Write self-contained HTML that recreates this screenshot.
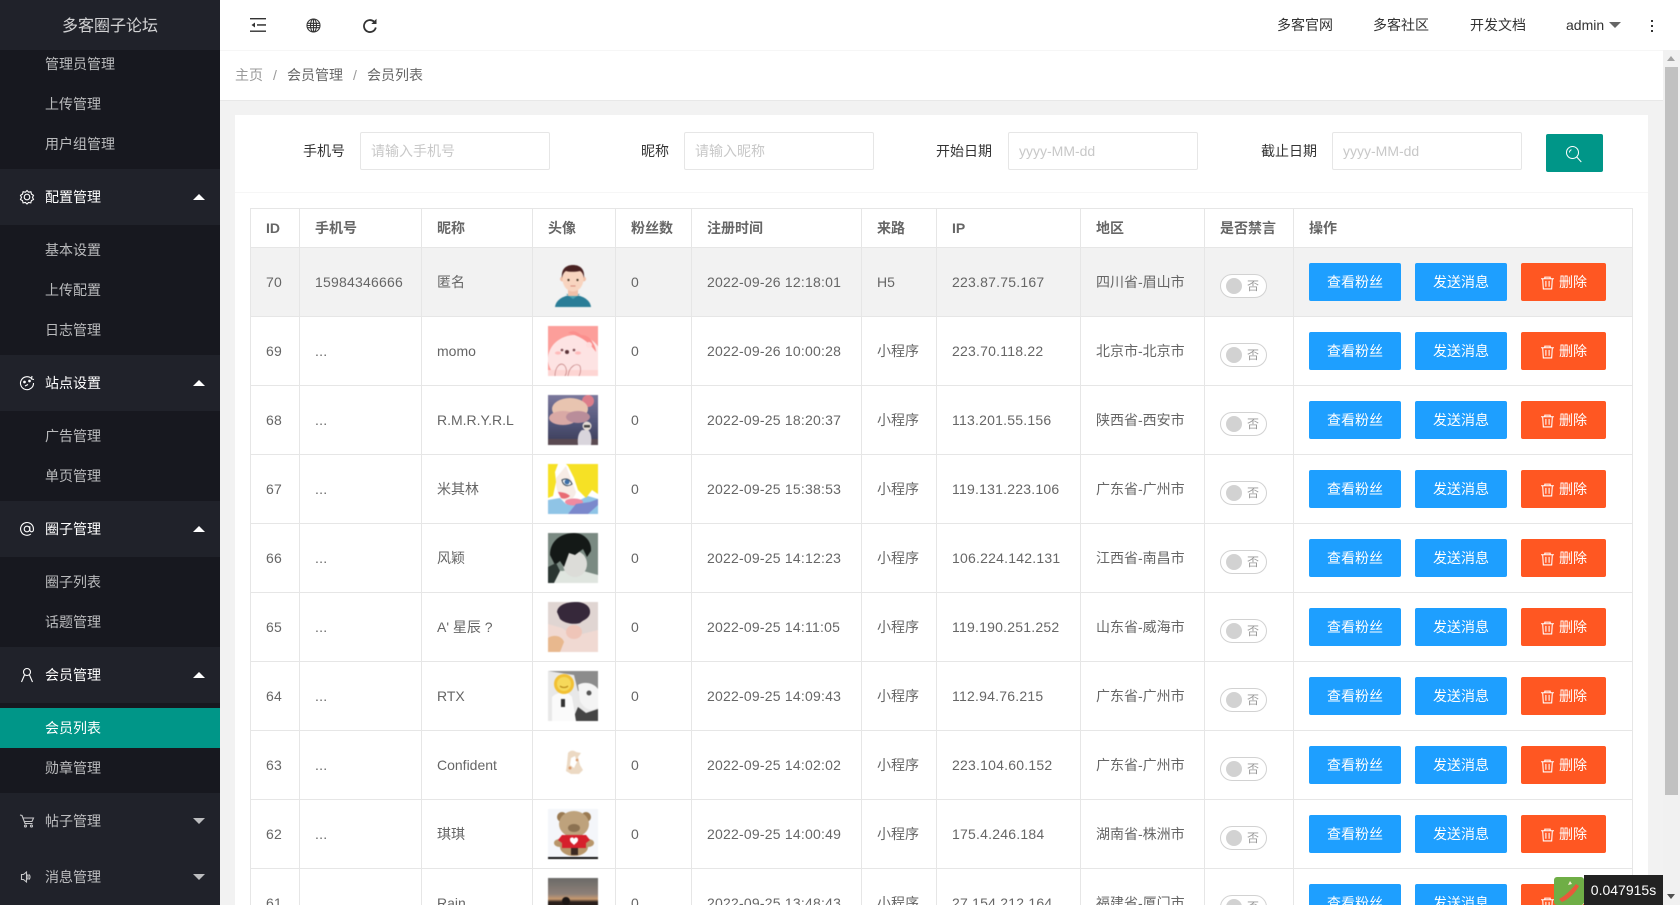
<!DOCTYPE html>
<html lang="zh">
<head>
<meta charset="utf-8">
<title>多客圈子论坛</title>
<style>
*{box-sizing:border-box;margin:0;padding:0}
html,body{width:1680px;height:905px;overflow:hidden;background:#f2f2f2}
body{position:relative;font:14px/20px "Liberation Sans","WenQuanYi Zen Hei","Noto Sans CJK SC",sans-serif;color:#666}
.abs{position:absolute;white-space:nowrap}
#side{position:absolute;left:0;top:0;width:220px;height:905px;background:#20222a;overflow:hidden}
#logo{position:absolute;left:0;top:0;width:220px;height:50px;background:#20222a;color:rgba(255,255,255,.8);font-size:16px;line-height:54px;text-align:center;z-index:2}
.kids{position:absolute;left:0;width:220px;background:#17181f}
.kid{position:absolute;left:45px;height:40px;line-height:40px;color:rgba(255,255,255,.7)}
.active{position:absolute;left:0;width:220px;height:40px;background:#009688;color:#fff;line-height:40px;padding-left:45px}
.grp{position:absolute;left:45px;height:56px;line-height:56px;color:#fff}
.grp.off{color:rgba(255,255,255,.7)}
.up,.dn{position:absolute;left:193px;width:0;height:0;border-left:6px solid transparent;border-right:6px solid transparent}
.up{border-bottom:6px solid #fff}
.dn{border-top:6px solid rgba(255,255,255,.7)}
.ic{position:absolute;left:19px;width:16px;height:16px;fill:none;stroke:#fff;stroke-width:1.1}
#top{position:absolute;left:220px;top:0;width:1460px;height:51px;background:#fff;border-bottom:1px solid #f6f6f6}
.nav{position:absolute;top:15px;color:#333;white-space:nowrap}
#bc{position:absolute;left:220px;top:51px;width:1443px;height:50px;background:#fff;border-bottom:1px solid #e8e8e8;line-height:49px}
#bc span{position:absolute;top:0;white-space:nowrap}
#card{position:absolute;left:235px;top:115px;width:1413px;height:790px;background:#fff}
#fline{position:absolute;left:235px;top:192px;width:1413px;height:1px;background:#f6f6f6}
.lab{position:absolute;top:132px;line-height:38px;color:#333;text-align:right;white-space:nowrap}
.inp{position:absolute;top:132px;width:190px;height:38px;border:1px solid #e6e6e6;border-radius:2px;background:#fff;padding-left:10px;line-height:36px;color:#c8c8c8;white-space:nowrap}
#sbtn{position:absolute;left:1546px;top:134px;width:57px;height:38px;background:#009688;border-radius:2px}
table{position:absolute;left:250px;top:208px;width:1382px;border-collapse:collapse;table-layout:fixed;background:#fff}
th,td{border:1px solid #e6e6e6;padding:0 15px;text-align:left;font-weight:400;white-space:nowrap;overflow:hidden;vertical-align:middle}
th{height:39px;font-weight:700;color:#666}
td{height:69px}
td:nth-child(1),td:nth-child(2),td:nth-child(6),td:nth-child(8){letter-spacing:.22px}
tr.hov td{background:#f2f2f2}
td svg.av{display:block;width:50px;height:50px;filter:blur(.5px)}
.sw{display:inline-block;position:relative;top:4px;width:47px;height:24px;border:1px solid #d2d2d2;border-radius:20px;background:#fff;vertical-align:middle}
.sw i{position:absolute;left:5px;top:3px;width:16px;height:16px;border-radius:50%;background:#d2d2d2}
.sw b{position:absolute;left:26px;top:1px;font-weight:400;font-size:12px;line-height:20px;color:#999}
.b{display:inline-block;height:38px;line-height:38px;border-radius:2px;color:#fff;text-align:center;vertical-align:middle;margin-right:14px}
.bl{width:92px;background:#1e9fff}
.rd{width:85px;background:#ff5722;margin-right:0}
.rd svg{width:15px;height:15px;vertical-align:-3px;margin-right:4px;fill:none;stroke:#fff;stroke-width:1}
#sb{position:absolute;left:1663px;top:50px;width:17px;height:855px;background:#f1f1f1}
#th{position:absolute;left:2px;top:17px;width:13px;height:728px;background:#c1c1c1}
#timer{position:absolute;left:1584px;top:875px;width:79px;height:30px;background:#222;color:#fff;line-height:30px;text-align:center}
</style>
</head>
<body>
<div id="side">
<div id="logo">多客圈子论坛</div>
<div class="kids" style="top:44px;height:125px"></div>
<div class="kid" style="top:44px">管理员管理</div>
<div class="kid" style="top:84px">上传管理</div>
<div class="kid" style="top:124px">用户组管理</div>
<svg class="ic" style="top:189px" viewBox="0 0 16 16"><circle cx="8" cy="8" r="2.8"/><path d="M8 1.5l1.6 1.7 2.3-.4.6 2.3 2 1.2-1 2.1 1 2.1-2.1 1.1-.6 2.300-2.300-.4L8 15l-1.600-1.500-2.300.4-.6-2.300-2-1.100 1-2.100-1-2.100 2-1.200.6-2.300 2.300.4z"/></svg>
<div class="grp" style="top:169px">配置管理</div><div class="up" style="top:194px"></div>
<div class="kids" style="top:225px;height:130px"></div>
<div class="kid" style="top:230px">基本设置</div>
<div class="kid" style="top:270px">上传配置</div>
<div class="kid" style="top:310px">日志管理</div>
<svg class="ic" style="top:375px" viewBox="0 0 16 16"><path d="M12.500 3.500A6.500 6.500 0 1 0 14.500 8"/><path d="M13 1l-.5 3 2.500.5"/><circle cx="5.500" cy="7" r=".8" fill="#fff"/><circle cx="10.500" cy="6" r=".8" fill="#fff"/><path d="M6 11l3-1.500"/></svg>
<div class="grp" style="top:355px">站点设置</div><div class="up" style="top:380px"></div>
<div class="kids" style="top:411px;height:90px"></div>
<div class="kid" style="top:416px">广告管理</div>
<div class="kid" style="top:456px">单页管理</div>
<svg class="ic" style="top:521px" viewBox="0 0 16 16"><circle cx="8" cy="8" r="2.800"/><path d="M10.800 5.200V9a1.800 1.800 0 0 0 3.600 0V8a6.400 6.400 0 1 0-2.500 5"/></svg>
<div class="grp" style="top:501px">圈子管理</div><div class="up" style="top:526px"></div>
<div class="kids" style="top:557px;height:90px"></div>
<div class="kid" style="top:562px">圈子列表</div>
<div class="kid" style="top:602px">话题管理</div>
<svg class="ic" style="top:667px" viewBox="0 0 16 16"><circle cx="8" cy="5" r="3.500"/><path d="M5.500 8L2.500 15M10.500 8l3 7"/></svg>
<div class="grp" style="top:647px">会员管理</div><div class="up" style="top:672px"></div>
<div class="kids" style="top:703px;height:90px"></div>
<div class="active" style="top:708px">会员列表</div>
<div class="kid" style="top:748px">勋章管理</div>
<svg class="ic" style="top:813px;stroke:rgba(255,255,255,.75)" viewBox="0 0 16 16"><path d="M1 2l2 .5 3 8h7.500M4 5h10.500l-1.500 3.500H5.500"/><circle cx="6.500" cy="13" r="1"/><circle cx="12.500" cy="13" r="1"/></svg>
<div class="grp off" style="top:793px">帖子管理</div><div class="dn" style="top:818px"></div>
<svg class="ic" style="top:869px;stroke:rgba(255,255,255,.75)" viewBox="0 0 16 16"><path d="M7.500 3v10L4.500 10.500H2.500v-5h2zM10 5.500a3.500 3.500 0 0 1 0 5M8 6h1v4H8"/></svg>
<div class="grp off" style="top:849px">消息管理</div><div class="dn" style="top:874px"></div>
</div>

<div id="top">
<svg class="abs" style="left:30px;top:17px" width="16" height="16" viewBox="0 0 16 16" fill="#333"><rect x="0" y="1" width="16" height="1.400"/><rect x="0" y="13.500" width="16" height="1.400"/><rect x="7" y="7.200" width="9" height="1.500"/><path d="M5 5.500v5L1.500 8z"/></svg>
<svg class="abs" style="left:86px;top:18px" width="15" height="15" viewBox="0 0 15 15" fill="none" stroke="#333" stroke-width="1.100"><circle cx="7.500" cy="7.500" r="6.500"/><ellipse cx="7.500" cy="7.500" rx="3" ry="6.500"/><path d="M7.500 1v13M1 5.300h13M1 9.700h13M1 7.500h13"/></svg>
<svg class="abs" style="left:142px;top:18px" width="16" height="16" viewBox="0 0 16 16" fill="none" stroke="#333" stroke-width="1.800"><path d="M13.800 9.500A6 6 0 1 1 12 3.600"/><path d="M14.500 .8v5.200H9.300z" fill="#333" stroke="none"/></svg>
<span class="nav" style="left:1057px">多客官网</span>
<span class="nav" style="left:1153px">多客社区</span>
<span class="nav" style="left:1250px">开发文档</span>
<span class="nav" style="left:1346px">admin</span>
<div class="abs" style="left:1389px;top:22px;width:0;height:0;border-left:6px solid transparent;border-right:6px solid transparent;border-top:6px solid #666"></div>
<div class="abs" style="left:1431px;top:20px;width:2px;height:2px;background:#333;box-shadow:0 5px 0 #333,0 10px 0 #333"></div>
</div>

<div id="bc">
<span style="left:15px;color:#999">主页</span>
<span style="left:53px;color:#999">/</span>
<span style="left:67px">会员管理</span>
<span style="left:133px;color:#999">/</span>
<span style="left:147px">会员列表</span>
</div>

<div id="card"></div>
<div id="fline"></div>
<div class="lab" style="left:303px">手机号</div>
<div class="inp" style="left:360px">请输入手机号</div>
<div class="lab" style="left:641px">昵称</div>
<div class="inp" style="left:684px">请输入昵称</div>
<div class="lab" style="left:936px">开始日期</div>
<div class="inp" style="left:1008px">yyyy-MM-dd</div>
<div class="lab" style="left:1261px">截止日期</div>
<div class="inp" style="left:1332px">yyyy-MM-dd</div>
<div id="sbtn"><svg class="abs" style="left:19px;top:11px" width="18" height="18" viewBox="0 0 18 18" fill="none" stroke="#fff" stroke-width="1"><circle cx="7.500" cy="7.500" r="6"/><path d="M11.800 12l4.500 5M4.500 7.500a3 3 0 0 1 2-2.800"/></svg></div>

<table>
<colgroup><col style="width:49px"><col style="width:122px"><col style="width:111px"><col style="width:83px"><col style="width:76px"><col style="width:170px"><col style="width:75px"><col style="width:144px"><col style="width:124px"><col style="width:89px"><col style="width:339px"></colgroup>
<tr><th>ID</th><th>手机号</th><th>昵称</th><th>头像</th><th>粉丝数</th><th>注册时间</th><th>来路</th><th>IP</th><th>地区</th><th>是否禁言</th><th>操作</th></tr>

<tr class="hov"><td>70</td><td>15984346666</td><td>匿名</td><td><svg class="av" viewBox="0 0 50 50"><path d="M7 50c1-8 10-12 18-12s17 4 18 12z" fill="#2a7d97"/><path d="M18 37l7 5 7-5z" fill="#4aa3b5"/><rect x="20" y="29" width="10" height="10" fill="#f0c0a8"/><circle cx="14.500" cy="22" r="2.500" fill="#f0c0a8"/><circle cx="35.500" cy="22" r="2.500" fill="#f0c0a8"/><ellipse cx="25" cy="22" rx="10.500" ry="12.500" fill="#f8d4bf"/><path d="M14 21c-1-9 4-13 11-13s12 4 11 13c-1-4-2-6-4-7-5 1-11 1-14 0-2 1-3 3-4 7z" fill="#4a2222"/><circle cx="20.500" cy="23" r="1.100" fill="#432"/><circle cx="29.500" cy="23" r="1.100" fill="#432"/><path d="M22.500 29h5" stroke="#d68a7a" stroke-width="1"/></svg></td><td>0</td><td>2022-09-26 12:18:01</td><td>H5</td><td>223.87.75.167</td><td>四川省-眉山市</td><td><span class="sw"><i></i><b>否</b></span></td><td><span class="b bl">查看粉丝</span><span class="b bl">发送消息</span><span class="b rd"><svg viewBox="0 0 14 14"><path d="M1 3.500h12M4.500 3.500V2h5v1.500M2.500 3.500l.6 9.500h7.800l.6-9.500M5.500 5.500v5.500M8.500 5.500v5.500"/></svg>删除</span></td></tr>

<tr><td>69</td><td>...</td><td>momo</td><td><svg class="av" viewBox="0 0 50 50"><rect width="50" height="50" fill="#fc9e9a"/><ellipse cx="27" cy="33" rx="27" ry="24" fill="#fde3e3"/><path d="M20 7c6-4 10 0 13 2 5 0 9 2 12 8 2 3 3 6 3 9-5-7-12-15-28-19z" fill="#fb8f8d"/><circle cx="14" cy="24" r="1.300" fill="#7a4a50"/><circle cx="26" cy="24" r="1.300" fill="#7a4a50"/><circle cx="19" cy="26" r="2" fill="#5a3338"/><ellipse cx="10" cy="27" rx="3" ry="1.600" fill="#fbb"/><ellipse cx="30" cy="27" rx="3" ry="1.600" fill="#fbb"/><circle cx="41" cy="19" r="3" fill="#fdd"/><rect y="44" width="50" height="6" fill="#fdd5d3"/><path d="M7 50c0-9 5-14 9-11 3 3 3 8 1 11M20 50c1-9 8-14 12-10 1 3 1 6-1 10" fill="none" stroke="#c98a8a" stroke-width=".8"/></svg></td><td>0</td><td>2022-09-26 10:00:28</td><td>小程序</td><td>223.70.118.22</td><td>北京市-北京市</td><td><span class="sw"><i></i><b>否</b></span></td><td><span class="b bl">查看粉丝</span><span class="b bl">发送消息</span><span class="b rd"><svg viewBox="0 0 14 14"><path d="M1 3.500h12M4.500 3.500V2h5v1.500M2.500 3.500l.6 9.500h7.800l.6-9.500M5.500 5.500v5.500M8.500 5.500v5.500"/></svg>删除</span></td></tr>

<tr><td>68</td><td>...</td><td>R.M.R.Y.R.L</td><td><svg class="av" viewBox="0 0 50 50"><defs><linearGradient id="g3" x1="0" y1="0" x2="0" y2="1"><stop offset="0" stop-color="#7b789c"/><stop offset=".55" stop-color="#52567a"/><stop offset="1" stop-color="#3b3c57"/></linearGradient></defs><rect width="50" height="50" fill="url(#g3)"/><circle cx="40" cy="6" r="6" fill="#dc7d8a"/><ellipse cx="22" cy="14" rx="18" ry="11" fill="#e8c4b0"/><ellipse cx="15" cy="23" rx="14" ry="7" fill="#d9a9a5"/><ellipse cx="30" cy="22" rx="12" ry="6" fill="#b98d9a"/><rect y="44" width="50" height="6" fill="#5a4a52"/><path d="M30 50c-1-8 1-13 4-15h6c3 2 4 8 3 15z" fill="#d9d5dc"/><circle cx="39" cy="31" r="4.500" fill="#e4dcd4"/><rect x="36" y="30" width="6" height="2.500" fill="#444"/></svg></td><td>0</td><td>2022-09-25 18:20:37</td><td>小程序</td><td>113.201.55.156</td><td>陕西省-西安市</td><td><span class="sw"><i></i><b>否</b></span></td><td><span class="b bl">查看粉丝</span><span class="b bl">发送消息</span><span class="b rd"><svg viewBox="0 0 14 14"><path d="M1 3.500h12M4.500 3.500V2h5v1.500M2.500 3.500l.6 9.500h7.800l.6-9.500M5.500 5.500v5.500M8.500 5.500v5.500"/></svg>删除</span></td></tr>

<tr><td>67</td><td>...</td><td>米其林</td><td><svg class="av" viewBox="0 0 50 50"><rect width="50" height="50" fill="#fff"/><path d="M0 36l12-2 6 6 14-4 8-4 10 3v15H0z" fill="#8fc4e6"/><path d="M8 14L18 2l10 26c-2 8-8 10-13 8-5-4-8-14-7-22z" fill="#f7ece6"/><path d="M14 16c4-2 8-1 10 4-4 3-9 2-10-4z" fill="#fff" stroke="#345" stroke-width="1"/><circle cx="19" cy="18" r="2.500" fill="#3e6fa8"/><path d="M10 28c4 0 9 1 12 4-3 3-7 3-9 2z" fill="#e86b73"/><ellipse cx="26" cy="38" rx="9" ry="3.500" fill="#f08aa0"/><path d="M20 50l8-10 14-2 8-3v6l-10 9z" fill="#7b88cc"/><path d="M0 0h10l-3 8 1 10-3 14-5 2zM18 0h32v30l-6-4-6 8-8-8-4-12-6-12z" fill="#f6e125"/></svg></td><td>0</td><td>2022-09-25 15:38:53</td><td>小程序</td><td>119.131.223.106</td><td>广东省-广州市</td><td><span class="sw"><i></i><b>否</b></span></td><td><span class="b bl">查看粉丝</span><span class="b bl">发送消息</span><span class="b rd"><svg viewBox="0 0 14 14"><path d="M1 3.500h12M4.500 3.500V2h5v1.500M2.500 3.500l.6 9.500h7.800l.6-9.500M5.500 5.500v5.500M8.500 5.500v5.500"/></svg>删除</span></td></tr>

<tr><td>66</td><td>...</td><td>风颖</td><td><svg class="av" viewBox="0 0 50 50"><rect width="50" height="50" fill="#7a8a82"/><path d="M0 50V36l14 2 14-2 22 6v8z" fill="#dfe5df"/><ellipse cx="27" cy="31" rx="12" ry="13" fill="#dcdcd8"/><path d="M2 22C2 7 14 0 26 0c10 0 18 8 17 18l-4 6-4-8-8 6-6-2-5 14-4-6-5 4z" fill="#141917"/><path d="M0 34l8-4 4 8-6 12H0z" fill="#2a3531"/></svg></td><td>0</td><td>2022-09-25 14:12:23</td><td>小程序</td><td>106.224.142.131</td><td>江西省-南昌市</td><td><span class="sw"><i></i><b>否</b></span></td><td><span class="b bl">查看粉丝</span><span class="b bl">发送消息</span><span class="b rd"><svg viewBox="0 0 14 14"><path d="M1 3.500h12M4.500 3.500V2h5v1.500M2.500 3.500l.6 9.500h7.800l.6-9.500M5.500 5.500v5.500M8.500 5.500v5.500"/></svg>删除</span></td></tr>

<tr><td>65</td><td>...</td><td>A' 星辰 ?</td><td><svg class="av" viewBox="0 0 50 50"><rect width="50" height="50" fill="#e0d5d2"/><path d="M0 22l14 4 12 8 24-6v22H0z" fill="#f0d9d2"/><path d="M0 36c6-4 14-2 16 4l-4 10H0z" fill="#e8b88e"/><ellipse cx="26" cy="30" rx="8" ry="7" fill="#efc5b8"/><path d="M9 10C10 2 20 0 28 0s15 4 14 11c-1 6-7 7-10 10-7 2-16 0-20-4z" fill="#36283a"/></svg></td><td>0</td><td>2022-09-25 14:11:05</td><td>小程序</td><td>119.190.251.252</td><td>山东省-威海市</td><td><span class="sw"><i></i><b>否</b></span></td><td><span class="b bl">查看粉丝</span><span class="b bl">发送消息</span><span class="b rd"><svg viewBox="0 0 14 14"><path d="M1 3.500h12M4.500 3.500V2h5v1.500M2.500 3.500l.6 9.500h7.800l.6-9.500M5.500 5.500v5.500M8.500 5.500v5.500"/></svg>删除</span></td></tr>

<tr><td>64</td><td>...</td><td>RTX</td><td><svg class="av" viewBox="0 0 50 50"><rect width="50" height="50" fill="#e8e8e8"/><path d="M0 0h50v28c-8-6-14-8-20-8L26 4z" fill="#8c8c8c"/><path d="M30 14c6-4 16-2 20 4v18c-6 6-14 2-18-6z" fill="#f4f4f4"/><circle cx="41" cy="22" r="2.500" fill="#555"/><path d="M24 50l6-14 8 6 12-4v12z" fill="#444"/><path d="M4 50V26c6-6 16-6 20 0l4 24z" fill="#fafafa"/><rect x="13" y="28" width="4" height="8" fill="#333"/><circle cx="16" cy="13" r="10" fill="#f2c033"/><circle cx="16" cy="13" r="7" fill="#f6d95a"/><path d="M12 15c2 2 6 2 8 0" stroke="#b38313" fill="none"/></svg></td><td>0</td><td>2022-09-25 14:09:43</td><td>小程序</td><td>112.94.76.215</td><td>广东省-广州市</td><td><span class="sw"><i></i><b>否</b></span></td><td><span class="b bl">查看粉丝</span><span class="b bl">发送消息</span><span class="b rd"><svg viewBox="0 0 14 14"><path d="M1 3.500h12M4.500 3.500V2h5v1.500M2.500 3.500l.6 9.500h7.800l.6-9.500M5.500 5.500v5.500M8.500 5.500v5.500"/></svg>删除</span></td></tr>

<tr><td>63</td><td>...</td><td>Confident</td><td><svg class="av" viewBox="0 0 50 50"><path d="M20 13c2-3 6-3 8-1l5 1-3 4 2 8 3 5-4 4h-8l-5-3 1-7z" fill="#ecd9c3"/><path d="M23 18l4-2 2 6-3 6-4-3z" fill="#fff"/><circle cx="22" cy="28" r="1.500" fill="#d99a6c"/><circle cx="29" cy="20" r="1.300" fill="#d99a6c"/></svg></td><td>0</td><td>2022-09-25 14:02:02</td><td>小程序</td><td>223.104.60.152</td><td>广东省-广州市</td><td><span class="sw"><i></i><b>否</b></span></td><td><span class="b bl">查看粉丝</span><span class="b bl">发送消息</span><span class="b rd"><svg viewBox="0 0 14 14"><path d="M1 3.500h12M4.500 3.500V2h5v1.500M2.500 3.500l.6 9.500h7.800l.6-9.500M5.500 5.500v5.500M8.500 5.500v5.500"/></svg>删除</span></td></tr>

<tr><td>62</td><td>...</td><td>琪琪</td><td><svg class="av" viewBox="0 0 50 50"><rect width="50" height="48" fill="#f4f6fa"/><rect y="48" width="50" height="2" fill="#111"/><circle cx="14" cy="8" r="5" fill="#9a7a52"/><circle cx="38" cy="8" r="5" fill="#9a7a52"/><ellipse cx="26" cy="15" rx="15" ry="13" fill="#bea27c"/><ellipse cx="26" cy="19" rx="6" ry="4" fill="#8c7252"/><ellipse cx="26" cy="38" rx="14" ry="9" fill="#b8966a"/><ellipse cx="12" cy="34" rx="6" ry="4" fill="#b8966a"/><ellipse cx="40" cy="34" rx="6" ry="4" fill="#b8966a"/><path d="M14 26h24l4 5-4 3v5H14v-5l-4-3z" fill="#d6202c"/><rect x="23" y="39" width="7" height="7" fill="#3c2a22"/><path d="M22 31a2 2 0 0 1 4-1 2 2 0 0 1 4 1c0 2-2 3-4 5-2-2-4-3-4-5z" fill="#fff"/></svg></td><td>0</td><td>2022-09-25 14:00:49</td><td>小程序</td><td>175.4.246.184</td><td>湖南省-株洲市</td><td><span class="sw"><i></i><b>否</b></span></td><td><span class="b bl">查看粉丝</span><span class="b bl">发送消息</span><span class="b rd"><svg viewBox="0 0 14 14"><path d="M1 3.500h12M4.500 3.500V2h5v1.500M2.500 3.500l.6 9.500h7.800l.6-9.500M5.500 5.500v5.500M8.500 5.500v5.500"/></svg>删除</span></td></tr>

<tr><td>61</td><td>...</td><td>Rain</td><td><svg class="av" viewBox="0 0 50 50"><defs><linearGradient id="g10" x1="0" y1="0" x2="0" y2="1"><stop offset="0" stop-color="#6a6a68"/><stop offset=".32" stop-color="#8e8078"/><stop offset=".42" stop-color="#c89a70"/><stop offset=".48" stop-color="#2a201c"/><stop offset="1" stop-color="#1c1614"/></linearGradient></defs><rect width="50" height="50" fill="url(#g10)"/><circle cx="18" cy="23" r="4" fill="#1c1614"/></svg></td><td>0</td><td>2022-09-25 13:48:43</td><td>小程序</td><td>27.154.212.164</td><td>福建省-厦门市</td><td><span class="sw"><i></i><b>否</b></span></td><td><span class="b bl">查看粉丝</span><span class="b bl">发送消息</span><span class="b rd"><svg viewBox="0 0 14 14"><path d="M1 3.500h12M4.500 3.500V2h5v1.500M2.500 3.500l.6 9.500h7.800l.6-9.500M5.500 5.500v5.500M8.500 5.500v5.500"/></svg>删除</span></td></tr>
</table>

<div id="sb">
<div class="abs" style="left:4px;top:6px;width:0;height:0;border-left:4px solid transparent;border-right:4px solid transparent;border-bottom:5px solid #a3a3a3"></div>
<div id="th"></div>
<div class="abs" style="left:4px;top:844px;width:0;height:0;border-left:4px solid transparent;border-right:4px solid transparent;border-top:5px solid #505050"></div>
</div>
<svg class="abs" style="left:1554px;top:877px" width="30" height="28" viewBox="0 0 30 28"><rect width="30" height="28" rx="3" fill="#6fae46"/><path d="M5 22c6-3 12-9 17-15l3 2c-4 7-10 13-17 16z" fill="#e8593a"/><path d="M14 8l2-4 2 3z" fill="#f2ead0"/></svg>
<div id="timer">0.047915s</div>
</body>
</html>
